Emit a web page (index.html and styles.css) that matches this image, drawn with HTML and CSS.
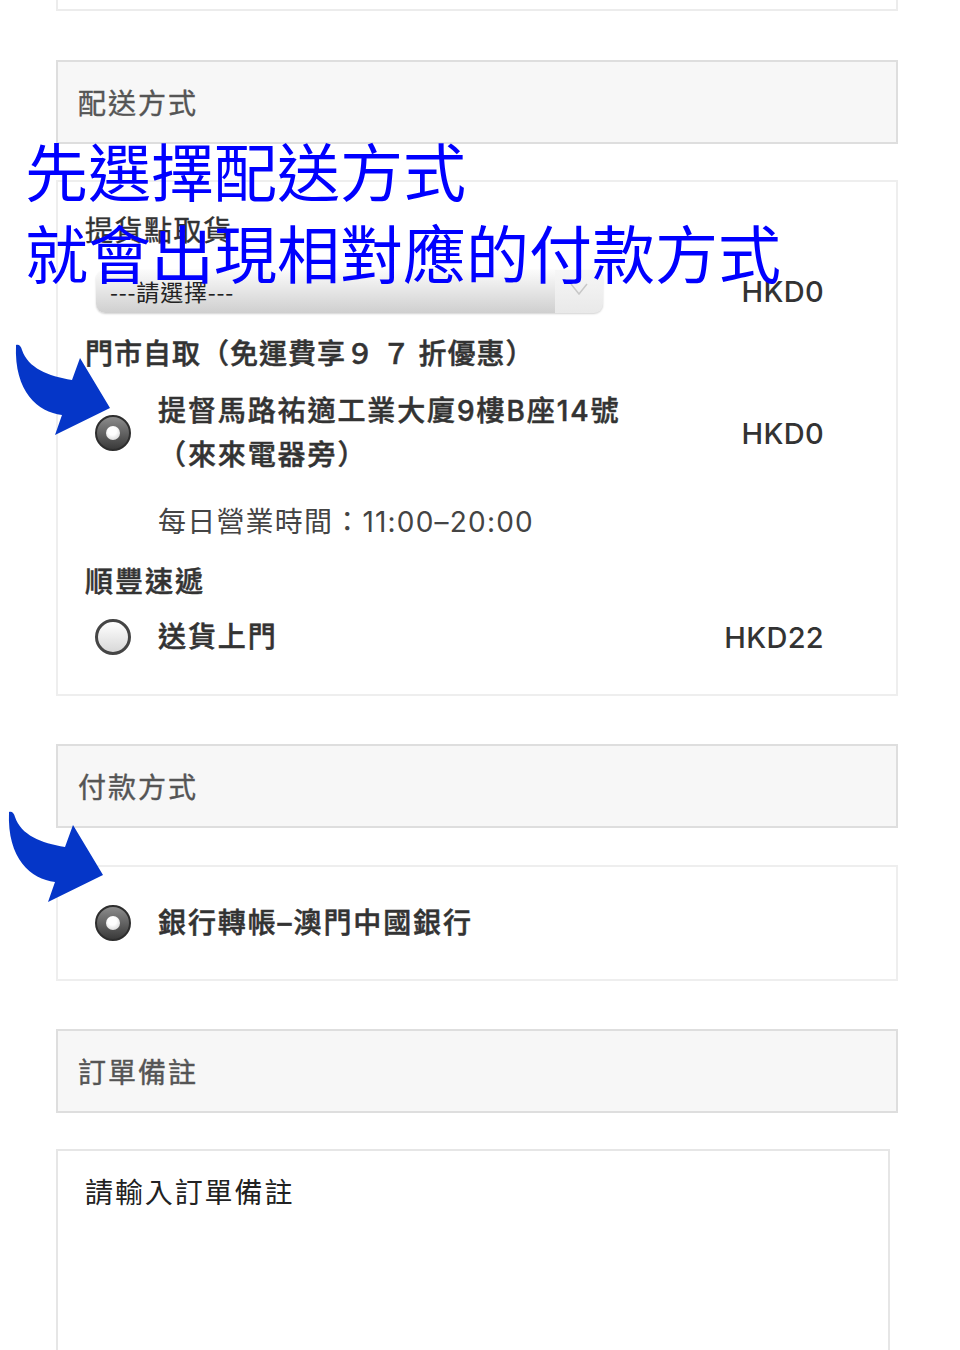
FILE: index.html
```html
<!DOCTYPE html>
<html lang="zh-Hant">
<head>
<meta charset="utf-8">
<title>配送方式</title>
<link rel="stylesheet" href="styles.css">
</head>
<body>
<div class="page">
  <div class="top-box"></div>

  <div class="sec-head">配送方式</div>
  <div class="card delivery">
    <div class="field-label">提貨點取貨</div>
    <div class="select-row">
      <div class="select">
        <span class="select-text">---請選擇---</span>
        <span class="select-arrow">
          <svg width="20" height="14" viewBox="0 0 20 14"><polyline points="2,2 10,12 18,2" fill="none" stroke="#c8c8c8" stroke-width="1.5"/></svg>
        </span>
      </div>
      <span class="price">HKD0</span>
    </div>

    <div class="group-title">門市自取（免運費享９ ７ 折優惠）</div>
    <div class="option">
      <span class="radio checked"></span>
      <div class="option-text">提督馬路祐適工業大廈9樓B座14號<br>（來來電器旁）</div>
      <span class="price">HKD0</span>
    </div>
    <div class="hours">每日營業時間：11:00–20:00</div>

    <div class="group-title second">順豐速遞</div>
    <div class="option last">
      <span class="radio"></span>
      <div class="option-text">送貨上門</div>
      <span class="price">HKD22</span>
    </div>
  </div>

  <div class="sec-head gap-large">付款方式</div>
  <div class="card payment">
    <div class="option">
      <span class="radio checked"></span>
      <div class="option-text">銀行轉帳–澳門中國銀行</div>
    </div>
  </div>

  <div class="sec-head gap-large">訂單備註</div>
  <div class="notes">請輸入訂單備註</div>

  <div class="overlay-note">先選擇配送方式<br>就會出現相對應的付款方式</div>

  <svg class="arrow arrow-one" width="120" height="110" viewBox="0 0 120 110">
    <path d="M16,15 C19,14 21,16 22,20 C28,38 48,46 72,50 L80,28 L110,78 L55,105 L62,85 C38,82 14,62 16,15 Z" fill="#0536c8"/>
  </svg>
  <svg class="arrow arrow-two" width="120" height="110" viewBox="0 0 120 110">
    <path d="M16,15 C19,14 21,16 22,20 C28,38 48,46 72,50 L80,28 L110,78 L55,105 L62,85 C38,82 14,62 16,15 Z" fill="#0536c8"/>
  </svg>
</div>
</body>
</html>
```

FILE: styles.css
```css
* { box-sizing: border-box; }

html, body {
  margin: 0;
  padding: 0;
  background: #ffffff;
}

body {
  font-family: Inter, "Noto Sans CJK TC", sans-serif;
  color: #333333;
  overflow: hidden;
  height: 1350px;
}

.page {
  position: relative;
  padding: 0 62px 0 56px;
}

.top-box {
  height: 11px;
  border: 2px solid #ececec;
  border-top: none;
}

.sec-head {
  margin-top: 49px;
  height: 84px;
  background: #f7f7f7;
  border: 2px solid #dedede;
  padding-left: 20px;
  display: flex;
  align-items: center;
  font-family: "Noto Sans CJK TC", sans-serif;
  font-size: 28px;
  font-weight: 400;
  -webkit-text-stroke: 0.4px #555555;
  color: #555555;
  letter-spacing: 2px;
}

.sec-head.gap-large { margin-top: 48px; }

.card {
  margin-top: 36px;
  background: #ffffff;
  border: 2px solid #eeeeee;
}

.delivery {
  padding: 0 72px 35px 27px;
}

.field-label {
  margin-top: 30px;
  line-height: 34px;
  font-size: 28px;
  font-weight: 400;
  -webkit-text-stroke: 0.4px #333333;
  letter-spacing: 1.5px;
  color: #333333;
  font-family: "Noto Sans CJK TC", sans-serif;
}

.select-row {
  margin-top: 24px;
  display: flex;
  align-items: center;
  justify-content: space-between;
}

.select {
  margin-left: 11px;
  width: 507px;
  height: 43px;
  display: flex;
  border-radius: 9px;
  overflow: hidden;
  box-shadow: 0 1px 2px rgba(0,0,0,0.18);
  background: linear-gradient(#fbfbfb, #cfcfcf);
}

.select-text {
  flex: 1;
  padding-left: 14px;
  line-height: 43px;
  font-size: 23px;
  letter-spacing: 0.8px;
  color: #222222;
  font-family: "Noto Sans CJK TC", sans-serif;
}

.select-arrow {
  width: 48px;
  display: flex;
  justify-content: center;
  padding-top: 12px;
  background: linear-gradient(#f6f6f6, #e9e9e9);
}

.price {
  font-family: Inter, sans-serif;
  font-size: 29px;
  font-weight: 500;
  color: #333;
  letter-spacing: 0.3px;
}

.group-title {
  margin-top: 19px;
  line-height: 40px;
  font-size: 28px;
  font-weight: 500;
  -webkit-text-stroke: 0.5px #333333;
  letter-spacing: 1px;
  color: #333333;
  font-family: "Noto Sans CJK TC", sans-serif;
}

.group-title.second { margin-top: 18px; letter-spacing: 2px; }

.option {
  margin-top: 17px;
  padding-left: 10px;
  display: flex;
  align-items: center;
}

.option.last { margin-top: 15px; }

.option-text {
  flex: 1;
  margin-left: 27px;
  line-height: 44px;
  font-size: 28px;
  font-weight: 500;
  -webkit-text-stroke: 0.5px #333333;
  letter-spacing: 1.9px;
  color: #333;
}

.radio {
  position: relative;
  flex: none;
  width: 36px;
  height: 36px;
  border-radius: 50%;
  border: 3px solid #454545;
  background: linear-gradient(#ffffff, #d8d8d8);
}

.radio.checked {
  border: 2px solid #2e2e2e;
  background: linear-gradient(#8c8c8c, #3a3a3a);
}

.radio.checked::after {
  content: "";
  position: absolute;
  left: 50%;
  top: 50%;
  width: 14px;
  height: 14px;
  margin: -7px 0 0 -7px;
  border-radius: 50%;
  background: radial-gradient(circle at 45% 35%, #ffffff 35%, #c9c9c9 100%);
}

.hours {
  margin-top: 25px;
  padding-left: 73px;
  line-height: 40px;
  font-size: 28px;
  font-weight: 400;
  letter-spacing: 1.2px;
  color: #444444;
}

.payment {
  margin-top: 37px;
  height: 116px;
  padding: 34px 72px 0 27px;
}

.payment .option { margin-top: 0; }

.notes {
  margin-top: 36px;
  margin-right: 8px;
  height: 260px;
  border: 2px solid #e6e6e6;
  padding: 22px 0 0 27px;
  line-height: 36px;
  font-size: 28px;
  letter-spacing: 1.9px;
  color: #222222;
  font-family: "Noto Sans CJK TC", sans-serif;
}

.overlay-note {
  position: absolute;
  left: 25px;
  top: 128px;
  font-family: "Noto Sans CJK TC", sans-serif;
  font-size: 63px;
  line-height: 82px;
  color: #0000ff;
  white-space: nowrap;
  z-index: 2;
}

.arrow {
  position: absolute;
  z-index: 3;
}

.arrow-one { left: 0; top: 330px; }
.arrow-two { left: -7px; top: 797px; }
```
